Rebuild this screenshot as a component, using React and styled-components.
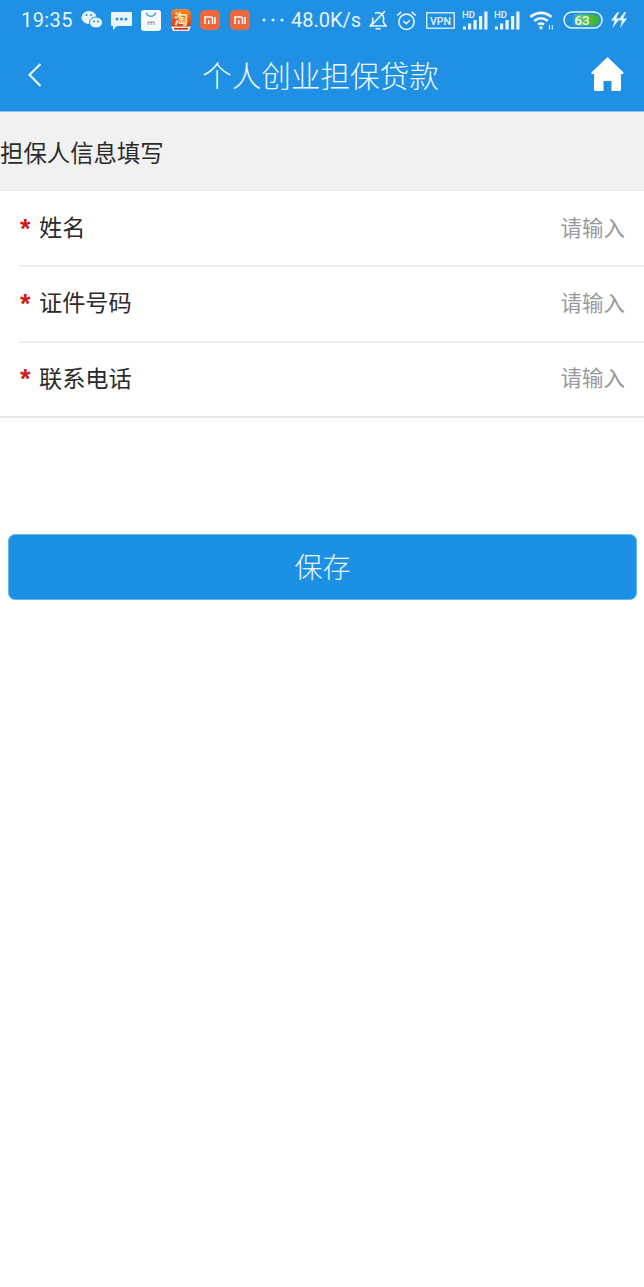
import React from 'react';
import styled, { createGlobalStyle } from 'styled-components';

const GlobalStyle = createGlobalStyle`
  html, body {
    margin: 0;
    padding: 0;
    background: #fff;
    font-family: "Roboto", "Noto Sans CJK SC", sans-serif;
  }
  * { box-sizing: border-box; }
`;

const Page = styled.div`
  width: 644px;
  min-height: 1287px;
  background: #fff;
`;

const Header = styled.header`
  background: #1f90e4;
  height: 112px;
  border-bottom: 1px solid #8cc2ec;
`;

const StatusBar = styled.div`
  height: 40px;
  padding-left: 21px;
  display: flex;
  align-items: center;
  color: #e6f3fc;
`;

const Time = styled.span`
  font-size: 20px;
  font-weight: 400;
  letter-spacing: 0.4px;
  width: 60px;
`;

const Speed = styled.span`
  font-size: 20px;
  font-weight: 400;
  width: 77px;
  white-space: nowrap;
`;

const Slot = styled.span`
  display: flex;
  align-items: center;
  justify-content: flex-start;
  width: ${p => p.$w}px;
  flex: none;
`;

const NavBar = styled.div`
  height: 71px;
  padding: 0 20px 2px 26px;
  display: flex;
  align-items: center;
  justify-content: space-between;
`;

const Title = styled.h1`
  margin: 0 0 0 6px;
  font-size: 29.6px;
  font-weight: 300;
  color: #f0f8fe;
  font-family: "Noto Sans CJK SC", sans-serif;
`;

const SectionTitle = styled.div`
  height: 79px;
  padding-top: 2px;
  background: #f1f1f2;
  border-bottom: 1px solid #e6e6e6;
  display: flex;
  align-items: center;
  font-size: 23.4px;
  color: #2b2b2b;
  font-family: "Noto Sans CJK SC", sans-serif;
  font-weight: 400;
`;

const Form = styled.div`
  border-bottom: 2px solid #e6e6e6;
`;

const Row = styled.div`
  height: ${p => (p.$last ? 73 : 76)}px;
  margin-left: 19px;
  padding: 0 19px 4px 0;
  display: flex;
  align-items: center;
  border-bottom: ${p => (p.$last ? 'none' : '2px solid #ececec')};
  font-family: "Noto Sans CJK SC", sans-serif;

  & + & {
    padding-bottom: 6px;
  }
`;

const Star = styled.span`
  color: #cf1a1a;
  font-size: 27px;
  font-weight: 700;
  width: 20px;
  line-height: 1;
  padding: 6px 0 0 1px;
  font-family: "Liberation Sans", sans-serif;
`;

const Label = styled.span`
  flex: 1;
  font-size: 23.2px;
  font-weight: 400;
  color: #2b2b2b;
`;

const Hint = styled.span`
  font-size: 21.5px;
  font-weight: 400;
  color: #999;
`;

const SaveWrap = styled.div`
  padding: 116px 7px 0 8px;
`;

const SaveButton = styled.button`
  display: block;
  width: 100%;
  height: 66px;
  padding: 0 0 2px;
  border: 1px solid #66b6ee;
  border-radius: 7px;
  background: #1c90e4;
  color: #eaf5fd;
  font-size: 28px;
  font-weight: 300;
  font-family: "Noto Sans CJK SC", sans-serif;
`;

const BackIcon = () => (
  <svg width="18" height="26" viewBox="0 0 18 26" fill="none">
    <path d="M14.500 2 3.500 12.800 14.500 24" stroke="#e3f2fc" strokeWidth="2.200" />
  </svg>
);

const HomeIcon = () => (
  <svg width="33" height="35" viewBox="0 0 33 35">
    <path
      fill="#fff"
      d="M16.500 0 32.300 15.200c.6.800.1 1.800-.9 1.800H30v15.500c0 1-.7 1.500-1.500 1.500H20.500V24h-8v10H4.500C3.700 34 3 33.500 3 32.500V17H1.600C.6 17 .1 16 .7 15.200Z"
    />
  </svg>
);

const WeChatIcon = () => (
  <svg width="22" height="20" viewBox="0 0 22 20">
    <ellipse cx="8" cy="7.500" rx="7.500" ry="6.500" fill="#e9f4fc" />
    <ellipse cx="15" cy="12.500" rx="6.500" ry="5.500" fill="#e9f4fc" stroke="#1f90e4" />
    <circle cx="13" cy="11.500" r="1" fill="#1f90e4" />
    <circle cx="17" cy="11.500" r="1" fill="#1f90e4" />
    <circle cx="5.500" cy="5" r="1" fill="#1f90e4" />
    <circle cx="10" cy="5" r="1" fill="#1f90e4" />
  </svg>
);

const MessageIcon = () => (
  <svg width="21" height="20" viewBox="0 0 21 20">
    <path fill="#e9f4fc" d="M1 2h19a1 1 0 0 1 1 1v12a1 1 0 0 1-1 1H6l-4 4v-4H1a1 1 0 0 1-1-1V3a1 1 0 0 1 1-1Z" />
    <circle cx="6" cy="9" r="1.500" fill="#1f90e4" />
    <circle cx="10.500" cy="9" r="1.500" fill="#1f90e4" />
    <circle cx="15" cy="9" r="1.500" fill="#1f90e4" />
  </svg>
);

const MiStoreIcon = () => (
  <svg width="20" height="21" viewBox="0 0 20 21">
    <rect width="20" height="21" rx="3" fill="#f4fafe" />
    <path d="M5.500 2.500c.5 5 8.500 5 9 0" fill="none" stroke="#3a9be2" strokeWidth="1.300" />
    <path d="M7 15v-3h6v3M10 12v3" fill="none" stroke="#7a8a98" strokeWidth="1" />
  </svg>
);

const TaobaoIcon = () => (
  <svg width="22" height="23" viewBox="0 0 22 23">
    <defs>
      <linearGradient id="taobaoBg" x1="0" y1="0" x2="0" y2="1">
        <stop offset="0" stopColor="#f08a2a" />
        <stop offset="1" stopColor="#d8321a" />
      </linearGradient>
    </defs>
    <rect x="1" y="0" width="20" height="19" rx="5" fill="url(#taobaoBg)" />
    <text x="11" y="15" textAnchor="middle" fontSize="14" fontWeight="700" fill="#fbe7b0" fontFamily="Noto Sans CJK SC, sans-serif">淘</text>
    <path d="M1 17.500h20l-2 4.500H3Z" fill="#f6ead8" />
    <rect x="4" y="19" width="14" height="1.600" fill="#c9301c" />
  </svg>
);

const MiIcon = () => (
  <svg width="20" height="20" viewBox="0 0 20 20">
    <rect width="20" height="20" rx="5" fill="#f0673a" />
    <path d="M5 14V7h6a1.500 1.500 0 0 1 1.500 1.500V14M8.700 10v4M15 7v7" fill="none" stroke="#fff" strokeWidth="1.500" />
  </svg>
);

const DotsIcon = () => (
  <svg width="22" height="6" viewBox="0 0 22 6">
    <circle cx="2" cy="3" r="1.600" fill="#dceefb" />
    <circle cx="11" cy="3" r="1.600" fill="#dceefb" />
    <circle cx="20" cy="3" r="1.600" fill="#dceefb" />
  </svg>
);

const BellOffIcon = () => (
  <svg width="20" height="20" viewBox="0 0 20 20" fill="none" stroke="#e6f3fc" strokeWidth="1.600">
    <path d="M2 16h16l-2.500-3.500V7.500A5.500 5.500 0 0 0 7 3.500M4.700 7.500v5L2 16" />
    <path d="M7.500 18.800h5" />
    <path d="M2 17 17 1" />
  </svg>
);

const AlarmIcon = () => (
  <svg width="21" height="21" viewBox="0 0 21 21" fill="none" stroke="#e6f3fc" strokeWidth="1.600">
    <circle cx="10.500" cy="11.800" r="7.700" />
    <path d="m7.300 11 3 2.700 3.500-3.500" />
    <path d="M1.200 5.500 5.200 1.800M19.800 5.500 15.800 1.800" />
  </svg>
);

const VpnBadge = () => (
  <svg width="29" height="17" viewBox="0 0 29 17">
    <rect x=".75" y=".75" width="27.500" height="15.500" fill="none" stroke="#e6f3fc" strokeWidth="1.300" />
    <text x="14.500" y="12.500" textAnchor="middle" fontSize="10.500" fontWeight="500" fill="#e6f3fc" fontFamily="Roboto, sans-serif">VPN</text>
  </svg>
);

const SignalIcon = () => (
  <svg width="26" height="20" viewBox="0 0 26 20">
    <text x="0" y="8" fontSize="9.500" fontWeight="500" fill="#e6f3fc" fontFamily="Roboto, sans-serif">HD</text>
    <path fill="#e6f3fc" d="M1 16.500h3V19.500H1zM6 13.500h3.200v6H6zM11.500 10h3.200v9.500h-3.200zM17 6h3.200v13.500H17zM22.300 1.500h3.200v18h-3.200z" />
  </svg>
);

const WifiIcon = () => (
  <svg width="25" height="20" viewBox="0 0 25 20" fill="none" stroke="#f2f9fe" strokeWidth="2.800">
    <path d="M1.500 7c6.200-5.600 14.800-5.600 21 0" />
    <path d="M5.300 11c4-3.400 9.400-3.400 13.400 0" />
    <path d="M9 14.500c1.800-1.300 4.200-1.300 6 0" strokeWidth="2.400" />
    <circle cx="12" cy="17.800" r="1.700" fill="#f2f9fe" stroke="none" />
    <path d="M20.500 15v4.500M23.300 15v4.500" strokeWidth="1" />
  </svg>
);

const BatteryIcon = () => (
  <svg width="40" height="18" viewBox="0 0 40 18">
    <defs>
      <linearGradient id="batteryFill" x1="0" y1="0" x2="1" y2="0">
        <stop offset="0.15" stopColor="#1f90e4" />
        <stop offset="0.4" stopColor="#6fc58f" />
        <stop offset="0.85" stopColor="#42b52a" />
      </linearGradient>
    </defs>
    <rect x="1" y="1" width="38" height="16" rx="8" fill="none" stroke="#e6f3fc" strokeWidth="1.500" />
    <rect x="4" y="3.500" width="32" height="11" rx="5.500" fill="url(#batteryFill)" />
    <text x="19" y="14" textAnchor="middle" fontSize="13.500" fontWeight="500" fill="#f0f8c8" fontFamily="Roboto, sans-serif">63</text>
  </svg>
);

const BoltIcon = () => (
  <svg width="17" height="16" viewBox="0 0 17 16">
    <path fill="#e6f3fc" d="M7.500 0 1 8.500h3.500L2.500 16 10 6.500H6.300L9 0ZM14.500 0 9 7l.5 1.500h2.500L10 16l7-9.500h-3.800L16 0Z" />
  </svg>
);

const fields = ['姓名', '证件号码', '联系电话'];

const App = () => (
  <Page>
    <GlobalStyle />
    <Header>
      <StatusBar>
        <Time>19:35</Time>
        <Slot $w={30}><WeChatIcon /></Slot>
        <Slot $w={30}><MessageIcon /></Slot>
        <Slot $w={29}><MiStoreIcon /></Slot>
        <Slot $w={30}><TaobaoIcon /></Slot>
        <Slot $w={30}><MiIcon /></Slot>
        <Slot $w={32}><MiIcon /></Slot>
        <Slot $w={29}><DotsIcon /></Slot>
        <Speed>48.0K/s</Speed>
        <Slot $w={28}><BellOffIcon /></Slot>
        <Slot $w={30}><AlarmIcon /></Slot>
        <Slot $w={36}><VpnBadge /></Slot>
        <Slot $w={32}><SignalIcon /></Slot>
        <Slot $w={35}><SignalIcon /></Slot>
        <Slot $w={34}><WifiIcon /></Slot>
        <Slot $w={47}><BatteryIcon /></Slot>
        <Slot $w={17}><BoltIcon /></Slot>
      </StatusBar>
      <NavBar>
        <BackIcon />
        <Title>个人创业担保贷款</Title>
        <HomeIcon />
      </NavBar>
    </Header>
    <SectionTitle>担保人信息填写</SectionTitle>
    <Form>
      {fields.map((label, i) => (
        <Row key={label} $last={i === fields.length - 1}>
          <Star>*</Star>
          <Label>{label}</Label>
          <Hint>请输入</Hint>
        </Row>
      ))}
    </Form>
    <SaveWrap>
      <SaveButton>保存</SaveButton>
    </SaveWrap>
  </Page>
);

export default App;
